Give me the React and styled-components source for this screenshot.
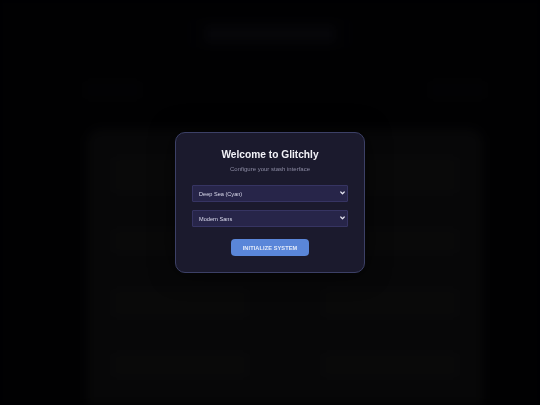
import React, { useState } from 'react'
import styled, { createGlobalStyle } from 'styled-components'

const GlobalStyle = createGlobalStyle`
  * { box-sizing: border-box; }
  html, body {
    margin: 0;
    padding: 0;
    background: #020204;
    font-family: "Liberation Sans", Arial, sans-serif;
    overflow: hidden;
  }
`;

// the app sitting behind the setup dialog, dimmed and blurred
const Backdrop = styled.div`
  position: fixed;
  inset: 0;
  display: flex;
  flex-direction: column;
  align-items: center;
  filter: blur(5px);
  background: #020204;
`;

const TopBar = styled.header`
  margin-top: 22px;
  width: 160px;
  height: 40px;
  border: 1px solid #08080c;
  border-radius: 4px;
  display: flex;
  align-items: center;
  justify-content: center;
  .logo {
    width: 132px;
    height: 18px;
    border-radius: 3px;
    background: #09090d;
  }
`;

const NavRow = styled.div`
  width: 400px;
  margin-top: 36px;
  margin-left: 30px;
  display: flex;
  justify-content: space-between;
  span {
    width: 55px;
    height: 18px;
    background: #040406;
    border-radius: 3px;
  }
`;

const MainPanel = styled.main`
  margin-top: 30px;
  margin-left: 30px;
  width: 396px;
  flex: 1;
  background: #0b0b0c;
  border-radius: 14px 14px 0 0;
  padding: 28px 26px;
  display: flex;
  flex-direction: column;
  gap: 36px;
`;

const GhostRow = styled.div`
  display: grid;
  grid-template-columns: ${p => p.$cols || '1fr 1fr'};
  gap: 76px;
  div {
    height: ${p => p.$h || 28}px;
    background: #0d0d0e;
    border-radius: 4px;
  }
`;

const Overlay = styled.div`
  position: fixed;
  inset: 0;
  background: rgba(0, 0, 0, 0.3);
  display: flex;
  align-items: center;
  justify-content: center;
`;

const Modal = styled.div`
  width: 190px;
  background: #1b1a2d;
  border: 1px solid #3c4066;
  border-radius: 10px;
  padding: 16px;
  display: flex;
  flex-direction: column;
  align-items: stretch;
  box-shadow: 0 0 24px rgba(0, 0, 0, 0.6);
`;

const Title = styled.h2`
  margin: 0;
  text-align: center;
  color: #f2f2f7;
  font-size: 10.2px;
  font-weight: 700;
  line-height: 12px;
`;

const Subtitle = styled.p`
  margin: 4px 0 12px;
  text-align: center;
  color: #8d8ca4;
  font-size: 6px;
  line-height: 8px;
`;

const SelectWrap = styled.div`
  position: relative;
  height: 17px;
  margin-bottom: ${p => p.$gap || 8}px;
  svg {
    position: absolute;
    right: 3px;
    top: 6px;
    pointer-events: none;
  }
`;

const Select = styled.select`
  display: block;
  appearance: none;
  height: 100%;
  width: 100%;
  padding: 0 10px 0 6px;
  background: #272549;
  color: #dcdcee;
  border: 1px solid #363462;
  border-radius: 1px;
  font-family: "Liberation Sans", Arial, sans-serif;
  font-size: 5.6px;
  outline: none;
`;

const Button = styled.button`
  align-self: center;
  width: 78px;
  height: 17px;
  border: none;
  border-radius: 4px;
  background: #5a86d9;
  color: #e4ebfa;
  font-family: "Liberation Sans", Arial, sans-serif;
  font-size: 5.6px;
  font-weight: 700;
  letter-spacing: 0.1px;
  cursor: pointer;
`;

const Chevron = () => (
  <svg width='5' height='4' viewBox='0 0 10 8'>
    <path d='M1.5 2l3.5 3.5L8.5 2' fill='none' stroke='#e6e6f2' strokeWidth='2.4' strokeLinecap='round' strokeLinejoin='round' />
  </svg>
)

const App = () => {
  const [theme, setTheme] = useState('deep-sea')
  const [font, setFont] = useState('modern-sans')

  return (
    <>
      <GlobalStyle />
      <Backdrop>
        <TopBar><div className='logo' /></TopBar>
        <NavRow><span /><span /></NavRow>
        <MainPanel>
          <GhostRow $h={36} $cols='1fr'><div /></GhostRow>
          <GhostRow $h={24} $cols='1fr'><div /></GhostRow>
          <GhostRow $h={28}><div /><div /></GhostRow>
          <GhostRow $h={24}><div /><div /></GhostRow>
        </MainPanel>
      </Backdrop>

      <Overlay>
        <Modal>
          <Title>Welcome to Glitchly</Title>
          <Subtitle>Configure your stash interface</Subtitle>
          <SelectWrap>
            <Select value={theme} onChange={e => setTheme(e.target.value)}>
              <option value='deep-sea'>Deep Sea (Cyan)</option>
              <option value='neon'>Neon Night (Pink)</option>
              <option value='matrix'>Matrix (Green)</option>
            </Select>
            <Chevron />
          </SelectWrap>
          <SelectWrap $gap={12}>
            <Select value={font} onChange={e => setFont(e.target.value)}>
              <option value='modern-sans'>Modern Sans</option>
              <option value='mono'>Terminal Mono</option>
            </Select>
            <Chevron />
          </SelectWrap>
          <Button>INITIALIZE SYSTEM</Button>
        </Modal>
      </Overlay>
    </>
  )
}

export default App
